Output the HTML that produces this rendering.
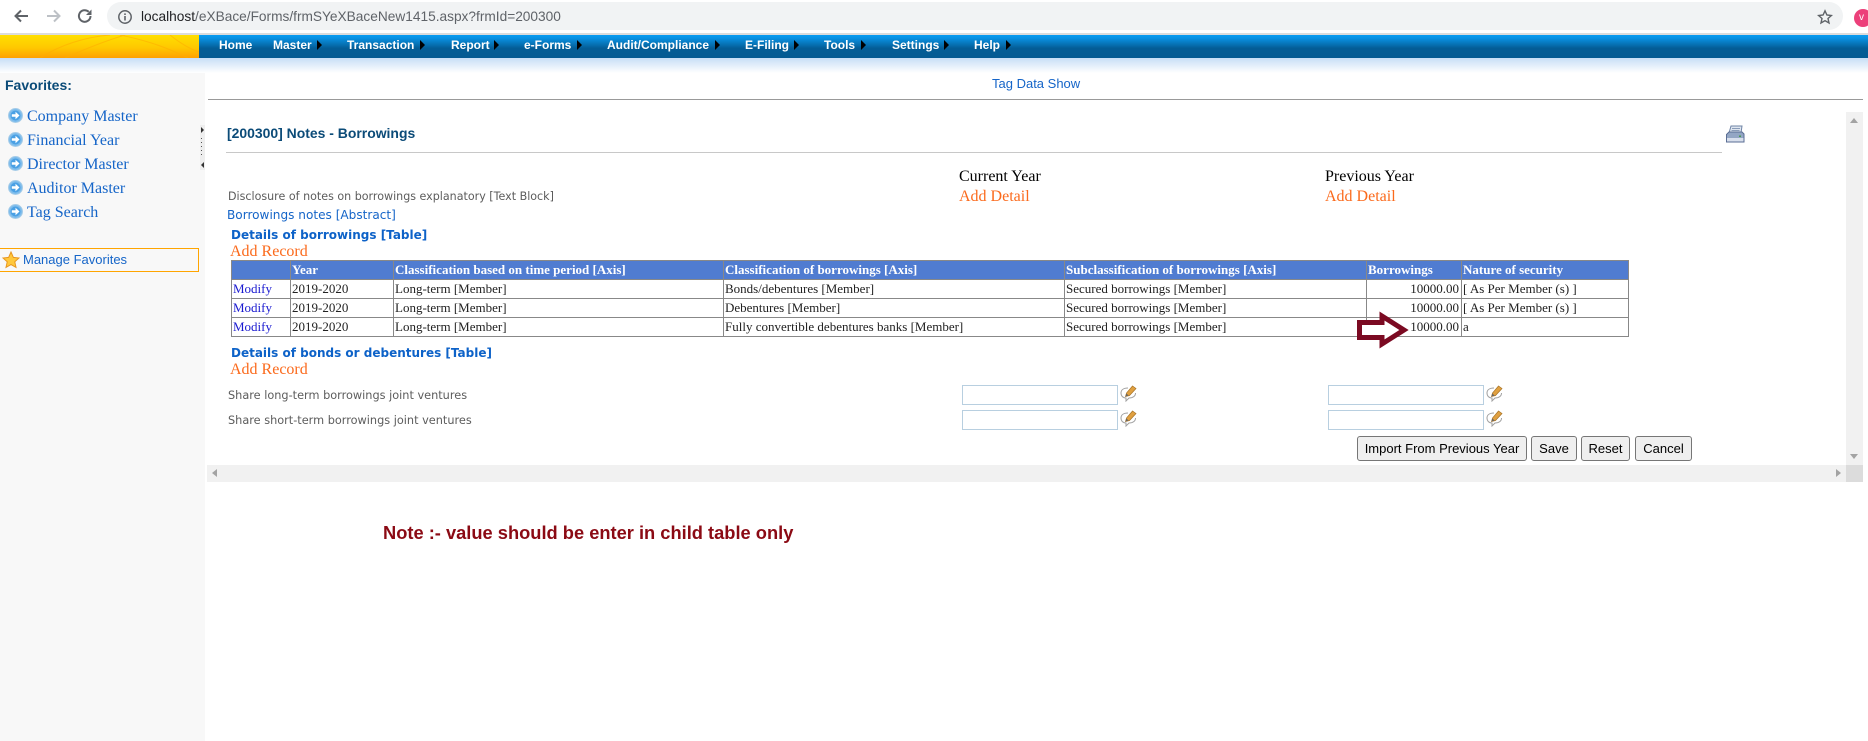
<!DOCTYPE html>
<html><head><meta charset="utf-8"><style>
html,body{margin:0;padding:0;background:#fff;width:1868px;height:741px;overflow:hidden;font-family:"Liberation Sans",sans-serif}
.a{position:absolute;white-space:nowrap}
.nav{top:36px;height:18px;line-height:18px;font:bold 12px/18px "Liberation Sans",sans-serif;color:#fff}
.tri{position:absolute;top:40px;width:0;height:0;border-left:5px solid #000;border-top:5px solid transparent;border-bottom:5px solid transparent}
.side{left:27px;height:20px;font:16px/20px "Liberation Serif",serif;color:#1565c8}
.ser{font:16px/20px "Liberation Serif",serif}
.or{color:#fb6a1c}
.dj{font:11.1px/14px "DejaVu Sans",sans-serif;color:#5c5c5c}
.bd{font:bold 12px/16px "DejaVu Sans",sans-serif;color:#0d62c8}
table{position:absolute;left:231px;top:260px;width:1397px;border-collapse:collapse;table-layout:fixed;font:13px/16px "Liberation Serif",serif;color:#222}
td,th{border:1px solid #888;height:19px;padding:1px 1px 0;text-align:left;vertical-align:top;overflow:hidden;white-space:nowrap;box-sizing:border-box}
th{background:#507cd1;color:#fff;font-weight:bold}
td.r{text-align:right;padding-right:2px}
td a{color:#1a1ad0}
.inp{position:absolute;width:156px;height:20px;box-sizing:border-box;border:1px solid #b8cfe0;background:#fff}
.btn{position:absolute;top:436px;height:25px;box-sizing:border-box;border:1px solid #767676;border-radius:3px;background:#efefef;font:13px/23px "Liberation Sans",sans-serif;color:#000;text-align:center}
</style></head><body>
<!-- browser chrome -->
<svg class="a" style="left:0;top:0" width="110" height="34" viewBox="0 0 110 34">
<path d="M28 16H16M21 10.5L15.5 16L21 21.5" fill="none" stroke="#5f6368" stroke-width="2"/>
<path d="M47 16H59M54 10.5L59.5 16L54 21.5" fill="none" stroke="#bdc1c6" stroke-width="2"/>
<path d="M90.5 16a5.8 5.8 0 1 1-1.8-4.2" fill="none" stroke="#5f6368" stroke-width="2"/>
<path d="M91.5 9.5v5.5h-5.5z" fill="#5f6368"/>
</svg>
<div class="a" style="left:107px;top:2px;width:1736px;height:28px;border-radius:14px;background:#f1f3f4"></div>
<svg class="a" style="left:117px;top:9px" width="16" height="16" viewBox="0 0 16 16"><circle cx="8" cy="8" r="6.2" fill="none" stroke="#5f6368" stroke-width="1.5"/><rect x="7.2" y="7" width="1.6" height="4.5" fill="#5f6368"/><rect x="7.2" y="4.4" width="1.6" height="1.6" fill="#5f6368"/></svg>
<div class="a" style="left:141px;top:8px;font:13.7px/18px 'Liberation Sans',sans-serif;color:#5f6368"><span style="color:#202124">localhost</span>/eXBace/Forms/frmSYeXBaceNew1415.aspx?frmId=200300</div>
<svg class="a" style="left:1817px;top:9px" width="16" height="16" viewBox="0 0 16 16"><path d="M8 1.8l1.900 4.200 4.500.5-3.400 3 1 4.500L8 11.700 4 14l1-4.500-3.400-3 4.500-.5z" fill="none" stroke="#5f6368" stroke-width="1.4"/></svg>
<div class="a" style="left:1854px;top:9px;width:18px;height:18px;border-radius:50%;background:#ec407a;color:#fff;font:10px/18px 'Liberation Sans',sans-serif;text-indent:5px">v</div>
<div class="a" style="left:0;top:33px;width:1868px;height:2px;background:#dcdcdc"></div>
<!-- nav -->
<div class="a" style="left:0;top:35px;width:199px;height:23px;background:linear-gradient(#ffdf00,#ffc800 55%,#ffa000)"></div>
<svg class="a" style="left:0;top:35px" width="199" height="23" viewBox="0 0 199 23"><path d="M40 23C60 10 85 2 110 0M65 23C85 14 105 6 125 0M120 0C150 6 170 14 188 23M170 0C180 8 190 14 199 17" fill="none" stroke="#ffad00" stroke-width="1" opacity=".6"/></svg>
<div class="a" style="left:199px;top:35px;width:1669px;height:23px;background:linear-gradient(#0a9cf2,#0a90e0 15%,#045d96 58%,#045a92)"></div>
<div class="a" style="left:0;top:58px;width:1868px;height:15px;background:linear-gradient(#c7def6,#fff)"></div>
<div class="a nav" style="left:219px">Home</div>
<div class="a nav" style="left:273px">Master</div><div class="tri" style="left:317px"></div>
<div class="a nav" style="left:347px">Transaction</div><div class="tri" style="left:420px"></div>
<div class="a nav" style="left:451px">Report</div><div class="tri" style="left:494px"></div>
<div class="a nav" style="left:524px">e-Forms</div><div class="tri" style="left:577px"></div>
<div class="a nav" style="left:607px">Audit/Compliance</div><div class="tri" style="left:715px"></div>
<div class="a nav" style="left:745px">E-Filing</div><div class="tri" style="left:794px"></div>
<div class="a nav" style="left:824px">Tools</div><div class="tri" style="left:861px"></div>
<div class="a nav" style="left:892px">Settings</div><div class="tri" style="left:944px"></div>
<div class="a nav" style="left:974px">Help</div><div class="tri" style="left:1006px"></div>
<!-- sidebar -->
<div class="a" style="left:0;top:73px;width:205px;height:668px;background:#f8f8f8"></div>
<div class="a" style="left:5px;top:76px;font:bold 14px/18px 'Liberation Sans',sans-serif;color:#0b4b78">Favorites:</div>
<svg width="0" height="0" style="position:absolute"><defs>
<g id="bl"><circle cx="7.500" cy="7.500" r="7" fill="#7dbcec" stroke="#a6cce8"/><circle cx="7.500" cy="7.500" r="5" fill="#4aa0e4"/><path d="M3.800 6.300h3.700V3.800l4 3.700-4 3.700V8.700H3.800z" fill="#fff"/></g>
<g id="ed"><path d="M8 3C3.500 3 1 5 1 8C1 11 3 13 6 13L6 16L9 13C13 13 15.500 11 15.500 8" fill="#fff" stroke="#a0a0a0"/><path d="M5.500 11.500L6.500 8L12.500 1L16 3.500L9.500 10.500z" fill="#e0a040" stroke="#a87428" stroke-width=".7"/><path d="M5.500 11.500L6.500 8.500L8.500 10.500z" fill="#666"/></g>
</defs></svg>
<svg class="a" style="left:8px;top:108px" width="15" height="15"><use href="#bl"/></svg><div class="a side" style="top:107px">Company Master</div>
<svg class="a" style="left:8px;top:132px" width="15" height="15"><use href="#bl"/></svg><div class="a side" style="top:131px">Financial Year</div>
<svg class="a" style="left:8px;top:156px" width="15" height="15"><use href="#bl"/></svg><div class="a side" style="top:155px">Director Master</div>
<svg class="a" style="left:8px;top:180px" width="15" height="15"><use href="#bl"/></svg><div class="a side" style="top:179px">Auditor Master</div>
<svg class="a" style="left:8px;top:204px" width="15" height="15"><use href="#bl"/></svg><div class="a side" style="top:203px">Tag Search</div>
<div class="a" style="left:0;top:248px;width:199px;height:24px;box-sizing:border-box;border:1px solid #ffa500;border-left:0"></div>
<svg class="a" style="left:2px;top:251px" width="18" height="18" viewBox="0 0 18 18"><path d="M9 1l2.400 5.400 5.600.6-4.200 3.800 1.200 5.600L9 13.600l-5 2.800 1.200-5.600L1 7l5.600-.6z" fill="#ffc83c" stroke="#e8961e"/></svg>
<div class="a" style="left:23px;top:252px;font:13px/16px 'Liberation Sans',sans-serif;color:#1565c8">Manage Favorites</div>
<div class="a" style="left:200px;top:125px;width:5px;height:45px;background:#eee"></div>
<div class="a" style="left:201px;top:127px;border-left:3px solid #333;border-top:3px solid transparent;border-bottom:3px solid transparent"></div>
<div class="a" style="left:201px;top:162px;border-right:3px solid #333;border-top:3px solid transparent;border-bottom:3px solid transparent"></div>
<div class="a" style="left:201px;top:138px;width:1px;height:18px;background:repeating-linear-gradient(#555 0 1px,transparent 1px 4px)"></div>
<!-- top content -->
<div class="a" style="left:992px;top:76px;font:13px/16px 'Liberation Sans',sans-serif;color:#1565c8">Tag Data Show</div>
<div class="a" style="left:208px;top:99px;width:1655px;height:1px;background:#999"></div>
<!-- scrollbars -->
<div class="a" style="left:1846px;top:112px;width:17px;height:353px;background:#f1f1f1"></div>
<div class="a" style="left:1850px;top:118px;border-bottom:5px solid #a3a3a3;border-left:4.500px solid transparent;border-right:4.500px solid transparent"></div>
<div class="a" style="left:1850px;top:454px;border-top:5px solid #a3a3a3;border-left:4.500px solid transparent;border-right:4.500px solid transparent"></div>
<div class="a" style="left:207px;top:465px;width:1639px;height:17px;background:#f1f1f1"></div>
<div class="a" style="left:1846px;top:465px;width:17px;height:17px;background:#dcdcdc"></div>
<div class="a" style="left:212px;top:469px;border-right:5px solid #a3a3a3;border-top:4.500px solid transparent;border-bottom:4.500px solid transparent"></div>
<div class="a" style="left:1836px;top:469px;border-left:5px solid #a3a3a3;border-top:4.500px solid transparent;border-bottom:4.500px solid transparent"></div>
<!-- heading -->
<div class="a" style="left:227px;top:124px;font:bold 13.95px/18px 'Liberation Sans',sans-serif;color:#0b4b78">[200300] Notes - Borrowings</div>
<div class="a" style="left:226px;top:152px;width:1496px;height:1px;background:#c8c8c8"></div>
<svg class="a" style="left:1725px;top:125px" width="20" height="19" viewBox="0 0 20 19"><path d="M6 1h11l-1 7H4z" fill="#dfe6f0" stroke="#6f84a6"/><path d="M7 3.500h8M6.500 5.500h8" stroke="#8a9cb8"/><path d="M1.500 9.500L4 7h13l2 2v8H1.500z" fill="#93a6c4" stroke="#5a6e94"/><rect x="2" y="13" width="16.500" height="3.500" fill="#d8dfec"/><rect x="14" y="10.500" width="2" height="1.500" fill="#4a9a50"/></svg>
<div class="a ser" style="left:959px;top:167px;color:#000">Current Year</div>
<div class="a ser or" style="left:959px;top:187px">Add Detail</div>
<div class="a ser" style="left:1325px;top:167px;color:#000">Previous Year</div>
<div class="a ser or" style="left:1325px;top:187px">Add Detail</div>
<div class="a dj" style="left:228px;top:190px">Disclosure of notes on borrowings explanatory [Text Block]</div>
<div class="a dj" style="left:227px;top:207px;font-size:12.1px;line-height:16px;color:#1565c8">Borrowings notes [Abstract]</div>
<div class="a bd" style="left:231px;top:227px">Details of borrowings [Table]</div>
<div class="a ser or" style="left:230px;top:242px">Add Record</div>
<!-- table -->
<table><colgroup><col style="width:59px"><col style="width:103px"><col style="width:330px"><col style="width:341px"><col style="width:302px"><col style="width:95px"><col style="width:167px"></colgroup>
<tr><th></th><th>Year</th><th>Classification based on time period [Axis]</th><th>Classification of borrowings [Axis]</th><th>Subclassification of borrowings [Axis]</th><th>Borrowings</th><th>Nature of security</th></tr>
<tr><td><a>Modify</a></td><td>2019-2020</td><td>Long-term [Member]</td><td>Bonds/debentures [Member]</td><td>Secured borrowings [Member]</td><td class="r">10000.00</td><td>[ As Per Member (s) ]</td></tr>
<tr><td><a>Modify</a></td><td>2019-2020</td><td>Long-term [Member]</td><td>Debentures [Member]</td><td>Secured borrowings [Member]</td><td class="r">10000.00</td><td>[ As Per Member (s) ]</td></tr>
<tr><td><a>Modify</a></td><td>2019-2020</td><td>Long-term [Member]</td><td>Fully convertible debentures banks [Member]</td><td>Secured borrowings [Member]</td><td class="r">10000.00</td><td>a</td></tr>
</table>
<svg class="a" style="left:1355px;top:311px" width="56" height="38" viewBox="0 0 56 38"><path d="M4.500 11.500H27V5L49 19L27 33V26.500H4.500z" fill="#fff" stroke="#7b0a22" stroke-width="5"/></svg>
<div class="a bd" style="left:231px;top:345px">Details of bonds or debentures [Table]</div>
<div class="a ser or" style="left:230px;top:360px">Add Record</div>
<div class="a dj" style="left:228px;top:389px;font-size:11.3px">Share long-term borrowings joint ventures</div>
<div class="a dj" style="left:228px;top:414px;font-size:11.3px">Share short-term borrowings joint ventures</div>
<div class="inp" style="left:962px;top:385px"></div><div class="inp" style="left:962px;top:410px"></div>
<div class="inp" style="left:1328px;top:385px"></div><div class="inp" style="left:1328px;top:410px"></div>
<svg class="a" style="left:1120px;top:385px" width="17" height="17"><use href="#ed"/></svg>
<svg class="a" style="left:1120px;top:410px" width="17" height="17"><use href="#ed"/></svg>
<svg class="a" style="left:1486px;top:385px" width="17" height="17"><use href="#ed"/></svg>
<svg class="a" style="left:1486px;top:410px" width="17" height="17"><use href="#ed"/></svg>
<div class="btn" style="left:1357px;width:170px">Import From Previous Year</div>
<div class="btn" style="left:1531px;width:46px">Save</div>
<div class="btn" style="left:1581px;width:49px">Reset</div>
<div class="btn" style="left:1635px;width:57px">Cancel</div>
<div class="a" style="left:383px;top:522px;font:bold 18.3px/22px 'Liberation Sans',sans-serif;color:#8b0a14">Note :- value should be enter in child table only</div>
</body></html>
